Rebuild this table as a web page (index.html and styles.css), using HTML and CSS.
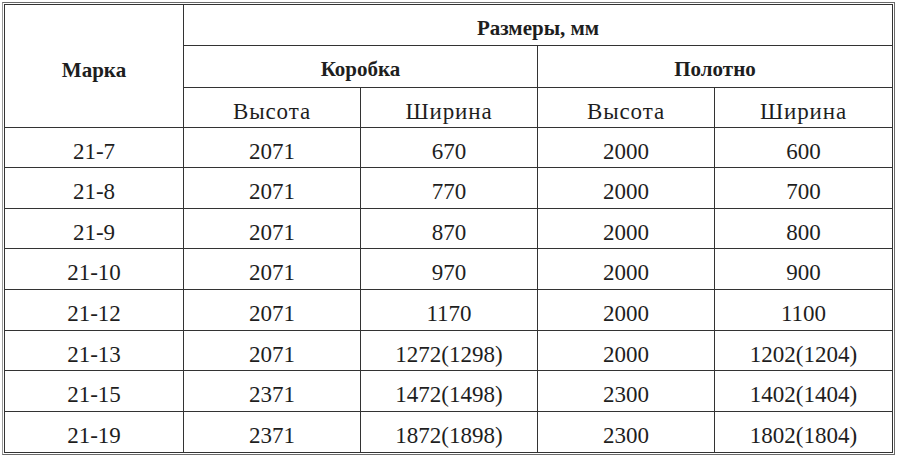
FILE: index.html
```html
<!DOCTYPE html>
<html lang="ru">
<head>
<meta charset="utf-8">
<title>Размеры дверных блоков</title>
<link rel="stylesheet" href="styles.css">
</head>
<body>
<div class="frame">
<table class="sizes">
<colgroup>
<col class="c1"><col class="c2"><col class="c3"><col class="c4"><col class="c5">
</colgroup>
<thead>
<tr class="r1"><th rowspan="3" class="hd mark">Марка</th><th colspan="4" class="hd">Размеры, мм</th></tr>
<tr class="r2"><th colspan="2" class="hd">Коробка</th><th colspan="2" class="hd">Полотно</th></tr>
<tr class="r3"><th class="sub">Высота</th><th class="sub">Ширина</th><th class="sub">Высота</th><th class="sub">Ширина</th></tr>
</thead>
<tbody>
<tr class="ra"><td>21-7</td><td>2071</td><td>670</td><td>2000</td><td>600</td></tr>
<tr class="rb"><td>21-8</td><td>2071</td><td>770</td><td>2000</td><td>700</td></tr>
<tr class="ra"><td>21-9</td><td>2071</td><td>870</td><td>2000</td><td>800</td></tr>
<tr class="rb"><td>21-10</td><td>2071</td><td>970</td><td>2000</td><td>900</td></tr>
<tr class="rb"><td>21-12</td><td>2071</td><td>1170</td><td>2000</td><td>1100</td></tr>
<tr class="ra"><td>21-13</td><td>2071</td><td>1272(1298)</td><td>2000</td><td>1202(1204)</td></tr>
<tr class="rb"><td>21-15</td><td>2371</td><td>1472(1498)</td><td>2300</td><td>1402(1404)</td></tr>
<tr class="rb"><td>21-19</td><td>2371</td><td>1872(1898)</td><td>2300</td><td>1802(1804)</td></tr>
</tbody>
</table>
</div>
</body>
</html>
```
FILE: styles.css
```css
html, body {
  margin: 0;
  padding: 0;
  background: #ffffff;
}

.frame {
  display: inline-block;
  margin: 2px 0 0 2px;
  border: 1px solid #6a6a6a;
  border-left-color: #9a9a9a;
  padding: 1px;
}

.sizes {
  border-collapse: collapse;
  table-layout: fixed;
  width: 888px;
  border: 1px solid #333;
  font-family: "Liberation Serif", "Times New Roman", serif;
  color: #1e1e1e;
}

.c1 { width: 179px; }
.c2 { width: 177px; }
.c3 { width: 177px; }
.c4 { width: 177px; }
.c5 { width: 178px; }

.sizes th,
.sizes td {
  border: 1px solid #333;
  text-align: center;
  vertical-align: middle;
  padding: 7px 0 0 0;
  font-size: 23px;
  line-height: 1;
  white-space: nowrap;
}

.sizes .hd {
  font-weight: bold;
  font-size: 21px;
  padding-top: 6px;
}

.sizes .mark {
  padding-top: 9px;
}

.sizes .sub {
  font-weight: normal;
  letter-spacing: 0.9px;
}

.r1 { height: 41px; }
.r2 { height: 42px; }
.r3 { height: 40px; }
.ra { height: 40px; }
.rb { height: 41px; }
```
